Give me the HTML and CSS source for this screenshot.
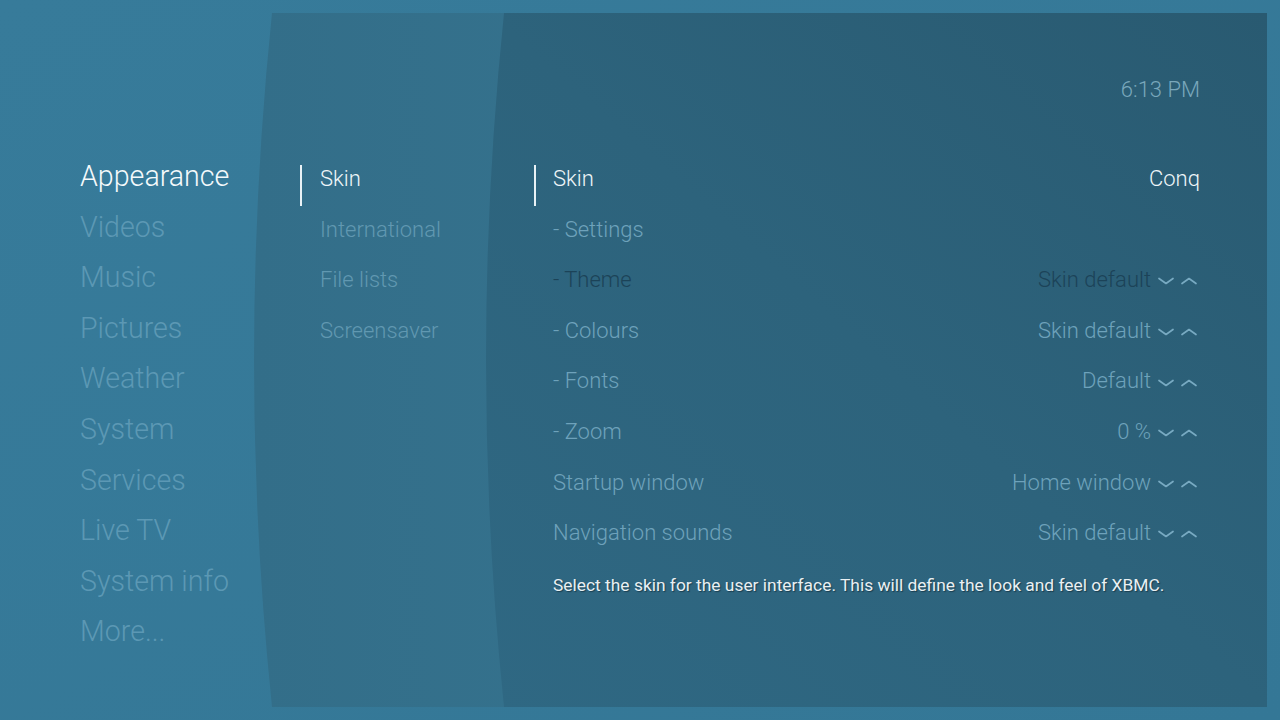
FILE: index.html
```html
<!DOCTYPE html>
<html lang="en">
<head>
<meta charset="utf-8">
<title>Settings - Appearance</title>
<link rel="stylesheet" href="styles.css">
</head>
<body>
<svg class="backdrop" width="1280" height="720" viewBox="0 0 1280 720" aria-hidden="true">
  <defs>
    <linearGradient id="gOuter" x1="0" y1="0" x2="1" y2="1">
      <stop offset="0" stop-color="#377b9a"/>
      <stop offset="1" stop-color="#347796"/>
    </linearGradient>
    <linearGradient id="gMid" x1="0" y1="0" x2="1" y2="0">
      <stop offset="0" stop-color="#336e89"/>
      <stop offset="1" stop-color="#387995"/>
    </linearGradient>
    <linearGradient id="gRight" x1="0" y1="1" x2="1" y2="0">
      <stop offset="0" stop-color="#2f6883"/>
      <stop offset="0.5" stop-color="#2d637c"/>
      <stop offset="1" stop-color="#295a71"/>
    </linearGradient>
  </defs>
  <rect x="0" y="0" width="1280" height="720" fill="url(#gOuter)"/>
  <path d="M272,13 H1267 V707 H272 Q236,360 272,13 Z" fill="url(#gMid)"/>
  <path d="M504,13 H1267 V707 H504 Q468,360 504,13 Z" fill="url(#gRight)"/>
</svg>

<div class="screen">
  <header class="topbar">
    <span class="clock">6:13 PM</span>
  </header>

  <main class="columns">
    <nav class="categories">
      <div class="cat is-active">Appearance</div>
      <div class="cat">Videos</div>
      <div class="cat">Music</div>
      <div class="cat">Pictures</div>
      <div class="cat">Weather</div>
      <div class="cat">System</div>
      <div class="cat">Services</div>
      <div class="cat">Live TV</div>
      <div class="cat">System info</div>
      <div class="cat">More...</div>
    </nav>

    <nav class="sections">
      <div class="sec is-active">Skin</div>
      <div class="sec">International</div>
      <div class="sec">File lists</div>
      <div class="sec">Screensaver</div>
    </nav>

    <section class="settings">
      <div class="row is-active">
        <span class="label">Skin</span>
        <span class="value value-plain">Conq</span>
      </div>
      <div class="row">
        <span class="label">- Settings</span>
      </div>
      <div class="row is-disabled">
        <span class="label">- Theme</span>
        <span class="value">Skin default</span>
        <svg class="spin" width="40" height="10" viewBox="0 0 40 10"><polyline points="1,2.5 8,7.5 15,2.5"/><polyline points="24,7.5 31,2.5 38,7.5"/></svg>
      </div>
      <div class="row">
        <span class="label">- Colours</span>
        <span class="value">Skin default</span>
        <svg class="spin" width="40" height="10" viewBox="0 0 40 10"><polyline points="1,2.5 8,7.5 15,2.5"/><polyline points="24,7.5 31,2.5 38,7.5"/></svg>
      </div>
      <div class="row">
        <span class="label">- Fonts</span>
        <span class="value">Default</span>
        <svg class="spin" width="40" height="10" viewBox="0 0 40 10"><polyline points="1,2.5 8,7.5 15,2.5"/><polyline points="24,7.5 31,2.5 38,7.5"/></svg>
      </div>
      <div class="row">
        <span class="label">- Zoom</span>
        <span class="value">0 %</span>
        <svg class="spin" width="40" height="10" viewBox="0 0 40 10"><polyline points="1,2.5 8,7.5 15,2.5"/><polyline points="24,7.5 31,2.5 38,7.5"/></svg>
      </div>
      <div class="row">
        <span class="label">Startup window</span>
        <span class="value">Home window</span>
        <svg class="spin" width="40" height="10" viewBox="0 0 40 10"><polyline points="1,2.5 8,7.5 15,2.5"/><polyline points="24,7.5 31,2.5 38,7.5"/></svg>
      </div>
      <div class="row">
        <span class="label">Navigation sounds</span>
        <span class="value">Skin default</span>
        <svg class="spin" width="40" height="10" viewBox="0 0 40 10"><polyline points="1,2.5 8,7.5 15,2.5"/><polyline points="24,7.5 31,2.5 38,7.5"/></svg>
      </div>
      <p class="desc">Select the skin for the user interface. This will define the look and feel of XBMC.</p>
    </section>
  </main>
</div>
</body>
</html>
```

FILE: styles.css
```css
html, body {
  margin: 0;
  padding: 0;
}

body {
  width: 1280px;
  height: 720px;
  overflow: hidden;
  position: relative;
  background: #367a99;
  font-family: Roboto, "Noto Sans", "Liberation Sans", sans-serif;
  font-weight: 300;
  color: #f2f7f9;
}

.backdrop {
  position: absolute;
  left: 0;
  top: 0;
  z-index: 0;
  display: block;
}

.screen {
  position: relative;
  z-index: 1;
  width: 1280px;
  height: 720px;
  display: flex;
  flex-direction: column;
}

.topbar {
  display: flex;
  justify-content: flex-end;
  padding: 77px 80px 0 0;
}

.clock {
  font-size: 22px;
  line-height: 26px;
  color: #79a7bb;
}

.columns {
  display: grid;
  grid-template-columns: 220px 234px 666px;
  padding: 51px 80px 0 80px;
}

/* left category menu */
.categories {
  display: flex;
  flex-direction: column;
  margin-top: -3px;
}

.cat {
  font-size: 28.6px;
  line-height: 50.6px;
  height: 50.6px;
  color: #5c98b4;
  white-space: nowrap;
}

.cat.is-active {
  color: #f4f9fb;
}

/* middle section list */
.sections {
  display: flex;
  flex-direction: column;
}

.sec {
  position: relative;
  font-size: 22px;
  line-height: 50.6px;
  height: 50.6px;
  padding-left: 20px;
  color: #6198b1;
  white-space: nowrap;
}

.sec.is-active {
  color: #eef6f9;
}

.sec.is-active::before,
.row.is-active::before {
  content: "";
  position: absolute;
  left: 0;
  top: 11px;
  width: 2px;
  height: 41px;
  background: #e9f2f6;
}

/* right settings list */
.settings {
  display: flex;
  flex-direction: column;
}

.row {
  position: relative;
  display: flex;
  align-items: center;
  height: 50.6px;
  padding-left: 19px;
  font-size: 22px;
  color: #6ea2bb;
  white-space: nowrap;
}

.row .label {
  flex: 1;
  line-height: 50.6px;
}

.row .value {
  line-height: 50.6px;
}

.row.is-active {
  color: #eef6f9;
}

.row.is-disabled {
  color: #1c4358;
}

.spin {
  flex: none;
  margin-left: 7px;
  margin-right: 2px;
  margin-top: 2px;
  fill: none;
  stroke: #78aac2;
  stroke-width: 1.7;
  stroke-linecap: round;
  stroke-linejoin: round;
}

.desc {
  margin: 14px 0 0 19px;
  font-size: 17.4px;
  line-height: 24px;
  font-weight: 400;
  color: #e9f0f3;
  text-shadow: 1px 1px 1px rgba(10, 30, 40, 0.55);
  white-space: nowrap;
}
```
